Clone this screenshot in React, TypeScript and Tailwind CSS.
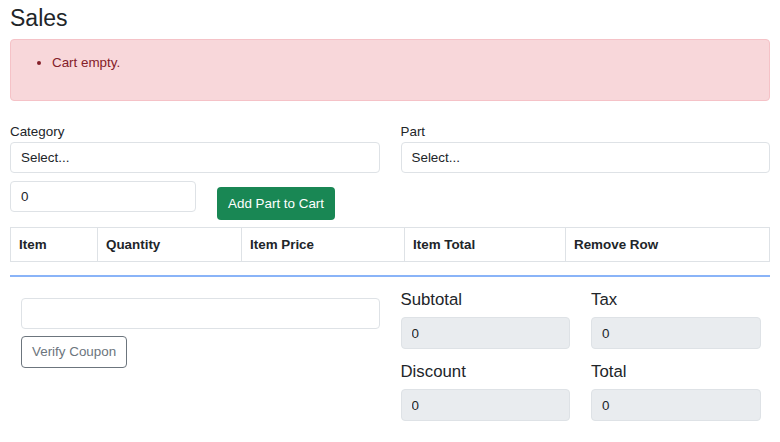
import { useState } from 'react';

const inputCls =
  'block h-[31px] w-full rounded-[4px] border border-[#dee2e6] bg-white px-[10px] text-[13.4px] text-[#212529] outline-none';
const readonlyCls =
  'block h-[32px] w-full rounded-[4px] border border-[#dee2e6] bg-[#e9ecef] px-[10px] text-[13.4px] text-[#212529] outline-none';

function TotalField({ label, value }: { label: string; value: string }) {
  return (
    <div>
      <div className="mb-[7px] text-[16.8px] leading-[20px] text-[#212529]">{label}</div>
      <input className={readonlyCls} value={value} disabled readOnly />
    </div>
  );
}

export default function App() {
  const [qty, setQty] = useState('0');
  const [coupon, setCoupon] = useState('');

  return (
    <div
      className="min-h-[442px] bg-white px-[10px] pt-[4px] text-[13.4px] leading-[20px] text-[#212529]"
      style={{ fontFamily: '"Liberation Sans", Arial, sans-serif' }}
    >
      <h1 className="text-[23px] leading-[28px] font-normal">Sales</h1>

      {/* validation summary */}
      <div className="mt-[7px] h-[62px] rounded-[4px] border border-[#f5c2c7] bg-[#f8d7da] px-[13px] pt-[13px] text-[#842029]">
        <ul className="list-disc pl-[28px]">
          <li>Cart empty.</li>
        </ul>
      </div>

      <div className="mt-[21px] grid grid-cols-2 gap-x-[21px]">
        <div>
          <label className="block">Category</label>
          <select className={inputCls + ' appearance-none'} defaultValue="">
            <option value="">Select...</option>
          </select>
        </div>
        <div>
          <label className="block">Part</label>
          <select className={inputCls + ' appearance-none'} defaultValue="">
            <option value="">Select...</option>
          </select>
        </div>
      </div>

      <div className="mt-[8px] flex items-start">
        <input
          className={inputCls + ' !w-[186px]'}
          value={qty}
          onChange={(e) => setQty(e.target.value)}
        />
        <button
          type="button"
          className="mt-[6px] ml-[21px] h-[33px] rounded-[4px] bg-[#198754] px-[11px] text-[13.4px] text-white"
        >
          Add Part to Cart
        </button>
      </div>

      <table className="mt-[7px] w-full border-collapse text-left">
        <thead>
          <tr className="h-[34px]">
            <th className="w-[87px] border border-[#dee2e6] px-[8px] font-bold">Item</th>
            <th className="w-[144px] border border-[#dee2e6] px-[8px] font-bold">Quantity</th>
            <th className="w-[163px] border border-[#dee2e6] px-[8px] font-bold">Item Price</th>
            <th className="w-[161px] border border-[#dee2e6] px-[8px] font-bold">Item Total</th>
            <th className="border border-[#dee2e6] px-[8px] font-bold">Remove Row</th>
          </tr>
        </thead>
        <tbody />
      </table>

      <div className="mt-[13px] h-[2px] bg-[#8ab4f8]" />

      <div className="mt-[13px] grid grid-cols-2 gap-x-[21px]">
        <div className="pl-[11px] pt-[8px]">
          <input
            className={inputCls}
            value={coupon}
            onChange={(e) => setCoupon(e.target.value)}
          />
          <button
            type="button"
            className="mt-[7px] h-[32px] rounded-[4px] border border-[#6c757d] bg-white px-[10px] text-[13.4px] text-[#6c757d]"
          >
            Verify Coupon
          </button>
        </div>
        <div className="grid w-[360px] grid-cols-2 gap-x-[21px] gap-y-[13px]">
          <TotalField label="Subtotal" value="0" />
          <TotalField label="Tax" value="0" />
          <TotalField label="Discount" value="0" />
          <TotalField label="Total" value="0" />
        </div>
      </div>
    </div>
  );
}
